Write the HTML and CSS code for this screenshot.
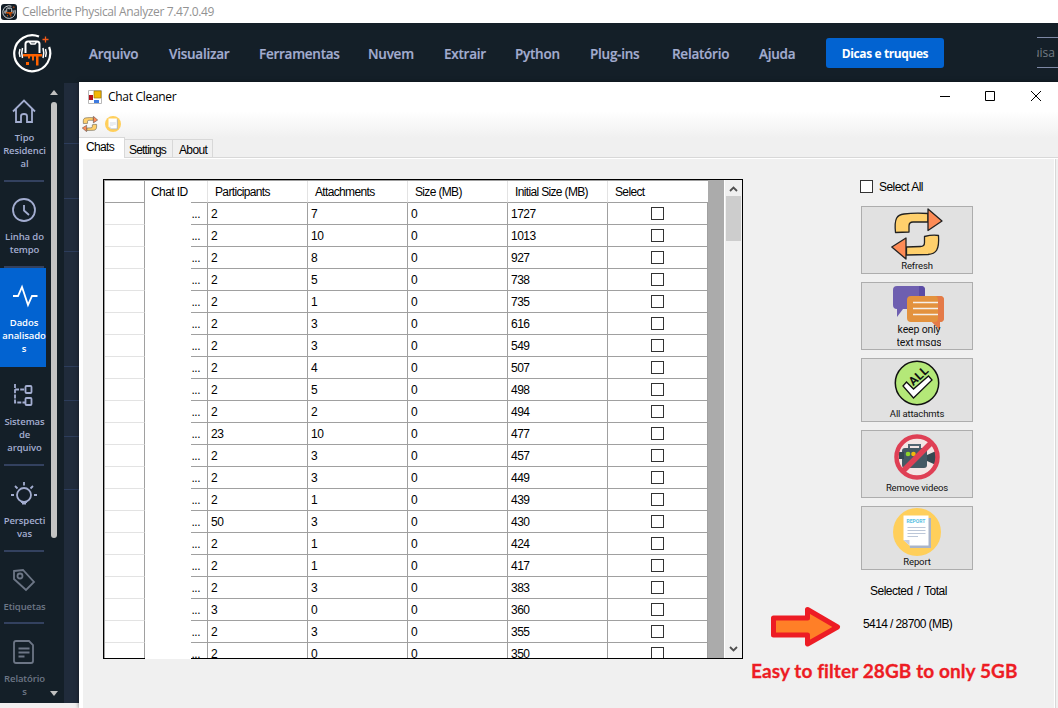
FILE: index.html
```html
<!DOCTYPE html>
<html lang="pt-BR">
<head>
<meta charset="utf-8">
<title>Cellebrite Physical Analyzer</title>
<link rel="stylesheet" href="styles.css">
</head>
<body>
<svg width="0" height="0" class="defs">
  <symbol id="brand" viewBox="0 0 40 40">
    <path d="M27 3.600A18 18 0 1 0 37.100 14" fill="none" stroke="#fff" stroke-width="2.200"/>
    <path d="M13.500 20V11q0-2.500 2.500-2.500h9q2.500 0 2.500 2.500v9" fill="none" stroke="#fff" stroke-width="2"/>
    <path d="M17.500 9l1.500 2h4l1.500-2M10.500 15q-1.500 5 0 10M8 16q-1.500 4 0 8M31 15q1.500 5 0 10M33.500 16q1.500 4 0 8" fill="none" stroke="#fff" stroke-width="1.500"/>
    <path d="M11 21h19v2.500h-3.500v9h-2.500v-9h-2v4h-2v-4h-2v2h-2v-2h-5zM14 29h3v3h-3z" fill="#ff6200"/>
    <path d="M33.500 3.500v6M30.500 6.500h6" stroke="#f45a18" stroke-width="1.300"/>
  </symbol>
  <symbol id="cycle" viewBox="0 0 52 52">
    <g stroke="#222" stroke-width="1.300" stroke-linejoin="round">
      <path d="M4.500 24.500C3 10 6 7 13 6Q24 4.500 37 5.500V14H22q-4 0-4 4v6z" fill="#ffd06c"/>
      <path d="M37 1L51 13 37 22.500z" fill="#fd8b56"/>
      <path d="M47.500 27.500C48.500 42 45 46 37 46.500L15.500 47V39l14-.5q4 0 4-4v-6q8-2 14-1z" fill="#ffd06c"/>
      <path d="M15 30v21L.8 39z" fill="#fd8b56"/>
    </g>
  </symbol>
  <symbol id="report" viewBox="0 0 48 48">
    <circle cx="24" cy="24" r="24" fill="#ffcf5b"/>
    <path d="M13 10h25v30H17z" fill="#a9b4c9"/>
    <path d="M10.500 7.500h25V37.500H16.500L10.500 32z" fill="#fff"/>
    <path d="M10.500 32h6v5.500z" fill="#c5cee0"/>
    <path d="M14.500 19.500h18M14.500 22.500h18M14.500 25.500h18M14.500 28.500h10.500" stroke="#bcc7d8" stroke-width="1"/>
  </symbol>
</svg>

<header class="app-title"><span class="app-icon"><svg width="14" height="14"><use href="#brand"/></svg></span>Cellebrite Physical Analyzer 7.47.0.49</header>
<div class="topbar">
  <svg class="logo" width="40" height="40"><use href="#brand"/></svg>
  <nav class="menu"><span>Arquivo</span><span>Visualizar</span><span>Ferramentas</span><span>Nuvem</span><span>Extrair</span><span>Python</span><span>Plug-ins</span><span>Relatório</span><span>Ajuda</span></nav>
  <div class="tips">Dicas e truques</div>
  <div class="search"><span>uisa</span></div>
</div>
<div class="workspace">
  <aside class="sidebar">
    <div class="item three first"><svg viewBox="0 0 26 26"><path d="M2 13.500L13 2.500l11 11M5 11v13h5v-6q0-2 3-2t3 2v6h5V11"/></svg>Tipo<br>Residenci<br>al</div>
    <div class="item two"><svg viewBox="0 0 26 26"><circle cx="13" cy="13" r="11"/><path d="M13 8v5.500l5 4.500"/></svg>Linha do<br>tempo</div>
    <div class="item three active"><svg viewBox="0 0 26 26"><path d="M1 13h5L10 4l6 18 4-9h5.500"/></svg>Dados<br>analisado<br>s</div>
    <div class="item three"><svg viewBox="0 0 26 26"><path d="M4 2v18.500h10M4 7.500h10" stroke-dasharray="4 1.200"/><rect x="14.500" y="4" width="6" height="7" rx="1"/><rect x="14.500" y="16" width="6" height="7" rx="1"/></svg>Sistemas<br>de<br>arquivo</div>
    <div class="item two"><svg viewBox="0 0 26 26"><circle cx="13" cy="14" r="7"/><path d="M10 21h6M11 22.500h4M13 1v3.500M4 5l2.500 2.500M22 5l-2.500 2.500M0 14h3M23 14h3"/></svg>Perspecti<br>vas</div>
    <div class="item one dim"><svg viewBox="0 0 26 26"><path d="M3 4l9-1 11 12-8 8L3 12z"/><circle cx="9" cy="9" r="2.500"/></svg>Etiquetas</div>
    <div class="item last dim"><svg viewBox="0 0 26 26"><path d="M5 2h13l4 4v16q0 2-2 2H5q-2 0-2-2V4q0-2 2-2zM7.500 9.500h11M7.500 13.500h11M7.500 17.500h6"/></svg>Relatório<br>s</div>
  </aside>
  <div class="side-scroll"><i class="up"></i><b></b><i class="down"></i></div>
  <div class="backdrop"></div>
</div>

<section class="window">
  <div class="win-title">
    <svg width="14" height="14" viewBox="0 0 14 14"><path d="M.5.500h13v13H.5z" fill="#fff" stroke="#b8b8b8"/><path d="M1 5h4v5H1z" fill="#b4111b"/><path d="M6 1h7v7H6z" fill="#f2b705" stroke="#a67c00" stroke-width=".7"/><path d="M6 10h5v3H6z" fill="#3d7ae0"/></svg>
    <span class="caption">Chat Cleaner</span>
    <svg class="controls" width="104" height="14" viewBox="0 0 104 14" fill="none" stroke="#000"><path d="M1 7.500h10M46.500 2.500h9v9h-9zM92 2l10 10M102 2L92 12"/></svg>
  </div>
  <div class="tools"><svg width="16" height="16"><use href="#cycle"/></svg><svg width="16" height="16"><use href="#report"/></svg></div>
  <div class="tabs"><span class="current">Chats</span><span>Settings</span><span>About</span></div>
  <div class="pane">
    <div class="grid">
      <div class="rows" id="rows">
        <div class="row head"><span></span><span>Chat ID</span><span>Participants</span><span>Attachments</span><span>Size (MB)</span><span>Initial Size (MB)</span><span>Select</span></div>
      </div>
      <div class="filler"></div>
      <div class="scroll">
        <svg width="9" height="6" viewBox="0 0 9 6"><path d="M1 5l3.500-3.500L8 5" fill="none" stroke="#505050" stroke-width="1.800"/></svg>
        <b></b>
        <svg width="9" height="6" viewBox="0 0 9 6"><path d="M1 1l3.500 3.500L8 1" fill="none" stroke="#505050" stroke-width="1.800"/></svg>
      </div>
      <div class="mask"></div>
    </div>
    <div class="actions">
      <div class="all"><i class="box"></i>Select All</div>
      <div class="buttons">
        <div class="btn tall"><svg width="52" height="52"><use href="#cycle"/></svg><span>Refresh</span></div>
        <div class="btn tall keep"><svg width="52" height="44" viewBox="0 0 52 44">
          <path d="M4 0h24q4 0 4 4v15q0 4-4 4H10l-6 8v-8q-4 0-4-4V4q0-4 4-4z" fill="#6e5fb0"/><path d="M26 0h2q4 0 4 4v8h-6z" fill="#5a4ba5"/>
          <path d="M18 10h29q4 0 4 4v18q0 4-4 4v8l-8-8H18q-4 0-4-4V14q0-4 4-4z" fill="#e3923e"/><path d="M43 10h4q4 0 4 4v18q0 4-4 4v8l-8-8h3q3 0 3-4V14q0-3-2-4z" fill="#e47a48"/>
          <path d="M20 16.500h25M20 22.500h25M20 28.500h25" stroke="#f5efe9" stroke-width="1.600"/></svg><span>keep only<br>text msgs</span></div>
        <div class="btn"><svg width="46" height="46" viewBox="0 0 46 46"><circle cx="23" cy="23" r="21.700" fill="#b4e878" stroke="#111" stroke-width="1.500"/><path d="M9 26l3.500-4 7 7L34.500 16l3.500 4-18.500 18z" fill="#fff" stroke="#111" stroke-width="1.300"/><text x="19" y="26.500" transform="rotate(-43 19 26)" class="all-mark">ALL</text></svg><span>All attachmts</span></div>
        <div class="btn tall remove"><svg width="46" height="46" viewBox="0 0 46 46"><circle cx="23" cy="23" r="21" fill="#f3e6e5"/><path d="M15 14v-3h11v3" fill="none" stroke="#536773" stroke-width="2"/><rect x="8" y="14" width="25" height="20" rx="3" fill="#455964"/><path d="M5 18h5v7H5zM33 21l9-4v14l-9-4z" fill="#354851"/><circle cx="14" cy="20" r="2.300" fill="#8fd529"/><circle cx="19.500" cy="20" r="2.300" fill="#efb90d"/><circle cx="23" cy="23" r="20.500" fill="none" stroke="#df4055" stroke-width="4.500"/><path d="M8 38L38 8" stroke="#df4055" stroke-width="5.500"/></svg><span>Remove videos</span></div>
        <div class="btn report"><svg width="48" height="48" viewBox="0 0 48 48"><use href="#report"/><text x="13.500" y="15" class="report-mark">REPORT</text></svg><span>Report</span></div>
      </div>
      <div class="legend">Selected / Total</div>
      <div class="total"><svg width="70" height="42" viewBox="0 0 70 42"><path d="M2.500 12h34V3.500L66.500 21l-30 17V29h-34z" fill="#ff7f27" stroke="#ed1c24" stroke-width="5" stroke-linejoin="round"/></svg><span>5414 / 28700 (MB)</span></div>
      <div class="note">Easy to filter 28GB to only 5GB</div>
    </div>
  </div>
</section>
<script src="rows.js"></script>
</body>
</html>
```
FILE: styles.css
```css
* { box-sizing: border-box; }
body { margin: 0; width: 1058px; height: 708px; overflow: hidden; position: relative; background: #f1eff0; font-family: "Liberation Sans", Arial, sans-serif; color: #000; }
svg { display: block; flex: none; }
.defs { position: absolute; }
.app-title { height: 23px; background: #fff; display: flex; align-items: center; gap: 5px; padding-left: 1px; color: #929292; font: 12px "Open Sans", sans-serif; letter-spacing: -.37px; white-space: nowrap; }
.app-icon { width: 16px; height: 16px; padding: 1px; border-radius: 3px; background: #141f28; }
.topbar { height: 59px; background: #141f28; display: flex; align-items: center; padding-left: 12px; }
.topbar .logo { margin-right: 37px; }
.menu { display: grid; grid-template-columns: 80px 90px 109px 76px 71px 75px 82px 87px 67px; color: #a3add0; font: 600 13.500px "Open Sans", sans-serif; letter-spacing: -.25px; padding-top: 3px; -webkit-text-stroke: .2px #a3add0; }
.tips { width: 118px; height: 30px; border-radius: 3px; background: #0263d1; color: #fff; text-align: center; font: 700 12px/31px "Open Sans", sans-serif; letter-spacing: -.4px; white-space: nowrap; }
.search { margin-left: 93px; width: 21px; height: 31px; border: solid #7d88a5; border-width: 1px 0; color: #737b83; font: 12px/30px "Open Sans", sans-serif; overflow: hidden; display: flex; justify-content: flex-end; padding-right: 3px; }
.workspace { height: 621px; display: flex; background: #141f28; width: 79px; }
.sidebar { width: 49px; }
.item { position: relative; width: 49px; color: #a3add0; text-align: center; padding: 15px 0 0; font: 600 9.500px/13px "Open Sans", sans-serif; letter-spacing: -.1px; white-space: nowrap; }
.item svg { width: 26px; height: 26px; margin: 0 auto 7px 11px; fill: none; stroke: currentColor; stroke-width: 1.800; }
.item::after { content: ""; position: absolute; left: 4px; bottom: 0; width: 40px; height: 2px; background: #33415f; }
.three { height: 99px; }
.first { height: 100px; padding-top: 16px; }
.two { height: 86px; }
.one { height: 72px; }
.last { height: 79px; }
.active { width: 46px; background: #0263d1; color: #fff; padding-left: 2px; }
.active svg { margin-left: 10px; }
.active::after, .last::after { display: none; }
.dim { color: #6d7686; }
.side-scroll { width: 15px; padding: 8px 7px 7px 2px; display: flex; flex-direction: column; align-items: center; }
.side-scroll i { width: 8px; border: solid transparent; border-width: 0 4px; }
.side-scroll .up { border-bottom: 5px solid #c0c0c0; }
.side-scroll .down { border-top: 5px solid #c0c0c0; margin-top: auto; }
.side-scroll b { width: 6px; height: 436px; margin-top: 7px; border-radius: 3px; background: #c4c4c4; }
.backdrop { width: 15px; margin-top: 1px; background: linear-gradient(#2c3c5b, #2c3c5b) 0 60px / 15px 1px no-repeat, linear-gradient(#2c3c5b, #2c3c5b) 0 115px / 15px 1px no-repeat, linear-gradient(#2c3c5b, #2c3c5b) 0 168px / 15px 1px no-repeat, linear-gradient(#2c3c5b, #2c3c5b) 0 283px / 15px 1px no-repeat, linear-gradient(#2c3c5b, #2c3c5b) 0 317px / 15px 1px no-repeat, linear-gradient(#2c3c5b, #2c3c5b) 0 353px / 15px 1px no-repeat, linear-gradient(#2c3c5b, #2c3c5b) 0 406px / 15px 1px no-repeat, #202b3b; }

.window { position: absolute; left: 79px; top: 82px; width: 979px; height: 626px; background: #fff; box-shadow: 0 0 4px #0008; display: flex; flex-direction: column; font-size: 12px; letter-spacing: -.65px; }
.win-title { height: 29px; display: flex; align-items: center; padding-left: 9px; }
.caption { margin-left: 6px; font: 12px "Open Sans", sans-serif; letter-spacing: -.3px; }
.controls { margin-left: auto; margin-right: 15px; margin-top: -2px; }
.tools { height: 27px; display: flex; gap: 7px; padding: 5px 0 0 3px; background: linear-gradient(#fff, #f0f0f0); }
.tabs { height: 20px; display: flex; align-items: flex-end; background: #f0f0f0; border-bottom: 1px solid #d8d8d8; }
.tabs span { height: 18px; padding: 0 6px 0 5px; line-height: 20px; border: 1px solid #d8d8d8; border-left: 0; border-bottom: 0; white-space: nowrap; }
.tabs span:nth-child(2) { width: 48px; padding-left: 4px; letter-spacing: -.8px; }
.tabs span:nth-child(3) { width: 40px; padding-left: 6px; }
.tabs .current { height: 21px; width: 46px; background: #fff; padding-left: 7px; line-height: 19px; margin-bottom: -1px; }
.pane { flex: 1; margin: 1px 3px 0 0; border-left: 4px solid #fff; border-right: 1px solid #fff; background: #f0f0f0; box-shadow: 1px 0 #d8d8d8, 3px 0 #f0f0f0; display: flex; padding: 20px 0 0 20px; }
.grid { position: relative; width: 640px; height: 480px; border: 1px solid #000; display: flex; background: #fff; flex: none; }
.rows { width: 604px; overflow: hidden; border-left: 1px solid #a0a0a0; border-top: 1px solid #a0a0a0; }
.row { display: grid; grid-template-columns: 40px 63px repeat(5, 100px); height: 22px; line-height: 22px; }
.row span { border-right: 1px solid #a0a0a0; border-bottom: 1px solid #a0a0a0; padding-left: 3px; height: 22px; }
.row span:first-child { border-bottom-color: #e3e3e3; }
.row span:nth-child(2) { text-align: right; padding-right: 7px; letter-spacing: -.5px; }
.row .check { display: flex; align-items: center; justify-content: center; padding: 0; }
.row:not(.head) span:nth-child(n+3) { letter-spacing: -.5px; }
.box { width: 13px; height: 13px; border: 1px solid #333; background: #fff; flex: none; }
.row.head span { padding-left: 7px; border-right-color: #e3e3e3; }
.row.head span:first-child { border-color: #a0a0a0; }
.row.head span:nth-child(2) { text-align: left; padding-left: 6px; letter-spacing: -.6px; }
.row.head span:last-child { border-right: 0; }
.filler { width: 16px; background: #ababab; }
.scroll { width: 18px; background: #f0f0f0; border-left: 1px solid #fff; display: flex; flex-direction: column; align-items: center; padding: 6px 0; }
.scroll b { width: 15px; height: 45px; background: #cdcdcd; margin-top: 4px; margin-bottom: auto; }
.mask { position: absolute; left: 41px; top: 22px; width: 46px; height: 457px; background: #fff; }
.actions { width: 312px; padding-left: 8px; }
.all { display: flex; align-items: center; gap: 6px; height: 13px; margin: 1px 0 0 109px; letter-spacing: -.55px; }
.buttons { margin: 13px 0 0 110px; display: grid; gap: 8px; width: 112px; }
.btn { height: 64px; background: #e1e1e1; border: 1px solid #adadad; display: flex; flex-direction: column; align-items: center; justify-content: space-between; padding: 1px 0 2px; font: 9.500px/11px Roboto, sans-serif; letter-spacing: -.15px; color: #111; }
.tall { height: 68px; }
.btn span { margin-top: -4px; text-align: center; }
.keep { justify-content: flex-start; padding: 3px 0 0 3px; overflow: hidden; font-size: 10.500px; line-height: 13px; }
.keep span { margin: -7px 0 0 1px; height: 23px; overflow: hidden; }
.remove { padding: 3px 0 4px; }
.all-mark { font: 700 12px Roboto, sans-serif; fill: #111; letter-spacing: .3px; }
.report-mark { font: 700 5px Roboto, sans-serif; fill: #59bfe2; letter-spacing: 0; }
.legend { margin: 14px 0 0 119px; height: 15px; line-height: 15px; letter-spacing: -.5px; word-spacing: 1.500px; }
.total { display: flex; align-items: center; margin: 7px 0 0 20px; height: 42px; gap: 22px; }
.total span { padding-bottom: 7px; letter-spacing: -.6px; }
.note { margin-top: 11px; color: #ed1c24; font: 700 19px/24px Lato, sans-serif; letter-spacing: .1px; white-space: nowrap; -webkit-text-stroke: .3px #ed1c24; }
```
FILE: rows.js
```js
const chats = [
  [2, 7, 1727], [2, 10, 1013], [2, 8, 927], [2, 5, 738], [2, 1, 735], [2, 3, 616], [2, 3, 549],
  [2, 4, 507], [2, 5, 498], [2, 2, 494], [23, 10, 477], [2, 3, 457], [2, 3, 449], [2, 1, 439],
  [50, 3, 430], [2, 1, 424], [2, 1, 417], [2, 3, 383], [3, 0, 360], [2, 3, 355], [2, 0, 350]
];
document.getElementById("rows").insertAdjacentHTML("beforeend", chats.map(([people, files, size]) =>
  `<div class="row"><span></span><span>...</span><span>${people}</span><span>${files}</span><span>0</span><span>${size}</span><span class="check"><i class="box"></i></span></div>`
).join(""));
```
